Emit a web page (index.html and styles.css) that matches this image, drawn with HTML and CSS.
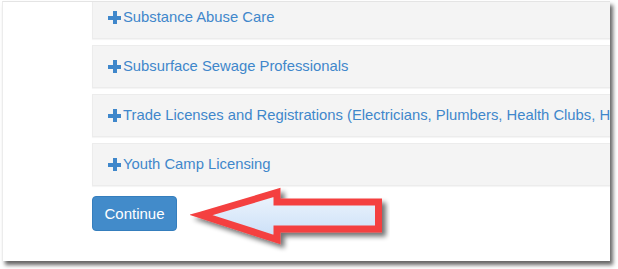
FILE: index.html
```html
<!DOCTYPE html>
<html>
<head>
<meta charset="utf-8">
<link rel="stylesheet" href="styles.css">
</head>
<body>
<div class="frame">
  <div class="content">
    <div class="panel-group">
      <div class="panel"><div class="panel-heading"><span class="plus"></span>Substance Abuse Care</div></div>
      <div class="panel"><div class="panel-heading"><span class="plus"></span>Subsurface Sewage Professionals</div></div>
      <div class="panel"><div class="panel-heading"><span class="plus"></span>Trade Licenses and Registrations (Electricians, Plumbers, Health Clubs, Ho</div></div>
      <div class="panel"><div class="panel-heading"><span class="plus"></span>Youth Camp Licensing</div></div>
    </div>
    <button class="btn">Continue</button>
  </div>
  <svg class="arrow" width="200" height="70" viewBox="190 182 200 70">
    <defs>
      <linearGradient id="g" x1="0" y1="0" x2="0" y2="1">
        <stop offset="0" stop-color="#eef5fd"/>
        <stop offset="1" stop-color="#c9def7"/>
      </linearGradient>
      <filter id="sh" x="-10%" y="-20%" width="130%" height="160%">
        <feGaussianBlur in="SourceAlpha" stdDeviation="2.5"/>
        <feOffset dx="4" dy="4" result="b"/>
        <feComponentTransfer><feFuncA type="linear" slope="0.55"/></feComponentTransfer>
        <feMerge><feMergeNode/><feMergeNode in="SourceGraphic"/></feMerge>
      </filter>
    </defs>
    <polygon filter="url(#sh)" points="201,214 277,191.5 277,201 378.5,201 378.5,228 277,228 277,238.5" fill="url(#g)" stroke="#f44040" stroke-width="7" stroke-linejoin="miter" stroke-miterlimit="10"/>
  </svg>
</div>
</body>
</html>
```
FILE: styles.css
```css
html, body {
  margin: 0;
  padding: 0;
  background: #fff;
}
body {
  width: 618px;
  height: 269px;
  overflow: hidden;
  font-family: "Liberation Sans", Arial, sans-serif;
}
.frame {
  position: relative;
  margin: 1px 0 0 2px;
  width: 607px;
  height: 259px;
  background: #fff;
  border-top: 1px solid #e4e4e4;
  border-left: 1px solid #ececec;
  box-shadow: 3px 4px 4px rgba(0, 0, 0, 0.6);
  overflow: hidden;
}
.content {
  padding-left: 89px;
  margin-top: -6px;
  display: flex;
  flex-direction: column;
  align-items: flex-start;
}
.panel-group {
  width: 700px;
  display: flex;
  flex-direction: column;
  gap: 6px;
}
.panel {
  border: 1px solid #ececec;
  background: #f4f4f4;
  box-shadow: 0 1px 1px rgba(0, 0, 0, 0.04);
}
.panel-heading {
  display: flex;
  align-items: center;
  padding: 12px 15px;
  font-size: 14.8px;
  line-height: 17px;
  color: #3f87cb;
  white-space: nowrap;
}
.plus {
  position: relative;
  width: 13px;
  height: 13px;
  margin-right: 2px;
  flex: none;
}
.plus::before,
.plus::after {
  content: "";
  position: absolute;
  background: #3f87cb;
}
.plus::before {
  left: 0;
  right: 0;
  top: 4.5px;
  height: 4px;
}
.plus::after {
  top: 0;
  bottom: 0;
  left: 4.5px;
  width: 4px;
}
.btn {
  margin-top: 10px;
  width: 85px;
  height: 35px;
  background: #428bca;
  border: 1px solid #357ebd;
  border-radius: 4px;
  color: #fff;
  font-family: "Liberation Sans", Arial, sans-serif;
  font-size: 15px;
  padding: 0;
}
.arrow {
  position: absolute;
  left: 187px;
  top: 181px;
}
```
